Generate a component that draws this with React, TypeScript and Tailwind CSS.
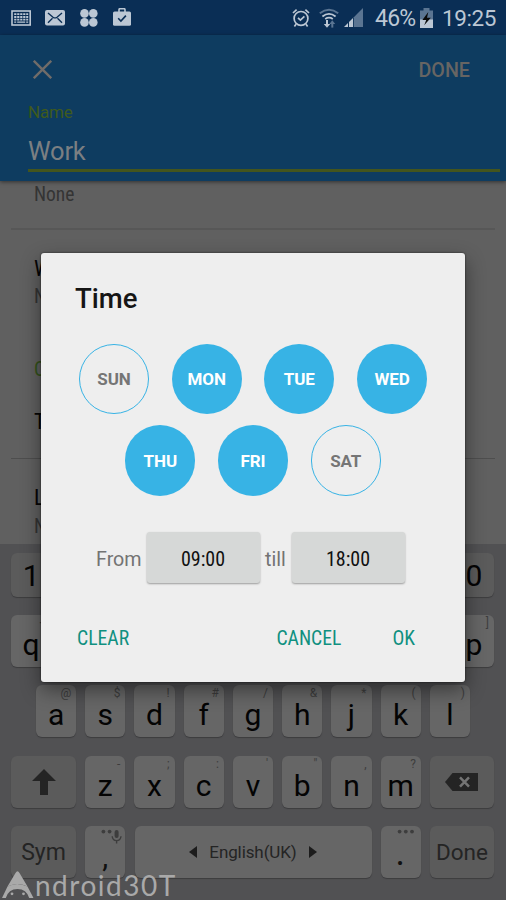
import { useState } from "react";

const ROW_HOME = [
  ["a", "@"], ["s", "$"], ["d", "!"], ["f", "#"], ["g", "/"],
  ["h", "&"], ["j", "*"], ["k", "("], ["l", ")"],
];
const ROW_BOTTOM = [
  ["z", "-"], ["x", ";"], ["c", ":"], ["v", "'"], ["b", '"'], ["n", ","], ["m", "?"],
];

const WEEK = [
  ["SUN", "MON", "TUE", "WED"],
  ["THU", "FRI", "SAT"],
];

const keyBase = "rounded-[6px] shadow-[0_1px_1px_#3c3c3e]";
const condensed = "font-['Roboto_Condensed','Roboto',sans-serif] [font-stretch:condensed]";

function StatusBar() {
  return (
    <div className="flex h-[35px] items-center bg-[#0a2e55] text-[#bcc7d4]">
      <svg className="ml-[11px]" width="21" height="16" viewBox="0 0 21 16">
        <rect x="1" y="1" width="18.2" height="14" fill="none" stroke="#bcc7d4" strokeWidth="1.6" />
        <path d="M3.2 4.2h14M3.2 7h14M3.2 9.6h14" stroke="#bcc7d4" strokeWidth="1.8" strokeDasharray="2.2 .8" />
        <path d="M3.2 12.2h2M6.2 12.2h8M15.2 12.2h2" stroke="#bcc7d4" strokeWidth="1.2" />
      </svg>
      <svg className="ml-[13px]" width="20" height="16" viewBox="0 0 20 16">
        <rect width="20" height="15.5" rx="2" fill="#bcc7d4" />
        <path d="M3 3l5 4.2q2 1.4 4 0L17 3M3 12.8l4.5-4.5M17 12.8l-4.5-4.5" fill="none" stroke="#0a2e55" strokeWidth="1.4" />
      </svg>
      <svg className="ml-[14.5px]" width="18" height="18" viewBox="0 0 18 18" fill="#bcc7d4">
        <circle cx="4.5" cy="4.4" r="4.3" />
        <circle cx="13.3" cy="4.4" r="4.3" />
        <circle cx="4.5" cy="13.4" r="4.3" />
        <circle cx="13.3" cy="13.4" r="4.3" />
      </svg>
      <svg className="ml-[15.5px] mb-px" width="18" height="18" viewBox="0 0 18 18">
        <path d="M6 4V1.8Q6 .7 7.1.7h3.8q1.1 0 1.1 1.1V4" fill="none" stroke="#bcc7d4" strokeWidth="1.6" />
        <rect y="3.4" width="18" height="14.4" rx="1.6" fill="#bcc7d4" />
        <path d="M5.2 10.3l2.7 2.7 5-5.4" fill="none" stroke="#0a2e55" strokeWidth="1.6" />
      </svg>
      <div className="grow" />
      <svg width="18" height="20" viewBox="0 0 18 20" fill="none" stroke="#bcc7d4" strokeWidth="1.7">
        <circle cx="9" cy="10.4" r="6.9" />
        <path d="M1 5l3.6-3.4M17 5l-3.6-3.4M4 16.2l-1.6 2.2M14 16.2l1.6 2.2M6 9.8l2.4 2.3 4-3.8" />
      </svg>
      <svg className="ml-[9px]" width="20" height="22" viewBox="0 0 20 22" fill="none">
        <path d="M.8 6.2q9.2-7 18.4 0" stroke="#5b7592" strokeWidth="2" />
        <path d="M3.4 9.4q6.6-5 13.2 0" stroke="#bcc7d4" strokeWidth="1.9" />
        <path d="M6.2 12q3.8-2.6 7.6 0" stroke="#bcc7d4" strokeWidth="1.8" />
        <path d="M8 13v5" stroke="#bcc7d4" strokeWidth="2" />
        <path d="M4.8 17h6.4L8 20.8z" fill="#bcc7d4" />
        <path d="M13.3 20.6v-4" stroke="#5b7592" strokeWidth="2" />
        <path d="M10.4 17h5.8l-2.9-3.8z" fill="#5b7592" />
      </svg>
      <svg className="ml-[5px]" width="19" height="19" viewBox="0 0 19 19">
        <path d="M9.8 9.2L19 0v19H9.8z" fill="#5b7592" />
        <path d="M0 19l4-4v4zM5 14l4-4v9H5z" fill="#bcc7d4" />
      </svg>
      <span className="ml-[12px] w-[42px] pt-[2px] text-[23px] leading-[33px] tracking-[-0.8px]">46%</span>
      <svg className="ml-[3px]" width="13" height="20" viewBox="0 0 13 20">
        <path d="M3.5 0h6v2.5H13V12H0V2.5h3.5z" fill="#5b7592" />
        <rect y="11.5" width="13" height="8.5" fill="#bcc7d4" />
        <path d="M8.3 4L2.4 12h3.8l-2 5.2 6.6-7.4H7z" fill="#0a0a0a" />
      </svg>
      <span className="ml-[9px] mr-[10px] w-[54px] pt-px text-[22.5px] leading-[34px] tracking-[-0.4px]">19:25</span>
    </div>
  );
}

function Header() {
  return (
    <header className="relative flex h-[146px] flex-col bg-[#0e3c60] shadow-[0_1px_4px_rgba(0,0,0,0.5)]">
      <div className="flex h-[68px] items-center justify-between pl-[33px] pr-[36px]">
        <svg width="19" height="19" viewBox="0 0 19 19" stroke="#706c69" strokeWidth="2.4">
          <path d="M.8.8l17.4 17.4M18.2.8L.8 18.2" />
        </svg>
        <span className="pt-[3px] text-[19.7px] font-medium text-[#676563]">DONE</span>
      </div>
      <label className="ml-7 mt-[-1px] text-[17px] leading-5 tracking-[-0.15px] text-[#3f5a1c]">Name</label>
      <div className="ml-7 mr-[6px] mt-[9px] h-[41px] border-b-[3px] border-[#43551d] pt-1 text-[25.5px] leading-[32px] tracking-[-0.2px] text-[#7b7f82]">
        Work
      </div>
    </header>
  );
}

function Settings() {
  return (
    <main className={`h-[363px] overflow-hidden bg-[#606060] px-[11px] text-[19.5px] leading-6 text-[#050505] ${condensed}`}>
      <div className="h-[49px] border-b-2 border-[#575757] pl-[23px] pt-[2px] text-[#343434]">None</div>
      <div className="h-[229px] border-b border-[#4e4e4e] pl-[23px] pt-[27px]">
        <p className="text-[22px]">W</p>
        <p className="pt-[4px] text-[#343434]">N</p>
        <p className="pt-[49px] text-[#33521a]">C</p>
        <p className="pt-[28px] text-[22px]">T</p>
      </div>
      <div className="pl-[23px] pt-[27px]">
        <p className="text-[22px]">L</p>
        <p className="pt-[5px] text-[#343434]">N</p>
      </div>
    </main>
  );
}

function NumberKey({ label }: { label: string }) {
  return (
    <div className={`h-[44px] w-[40.2px] bg-[#5b5b5b] text-center text-[30px] leading-[45px] text-[#040404] ${keyBase}`}>
      {label}
    </div>
  );
}

function Key({ label, hint }: { label: string; hint: string }) {
  return (
    <div className={`relative h-[52px] w-[40.2px] bg-[#666666] text-center text-[30px] leading-[60px] text-[#040404] ${keyBase}`}>
      {label}
      <span className="absolute right-[5px] top-0 text-[12px] leading-[16px] text-[#3d3d3d]">{hint}</span>
    </div>
  );
}

function Keyboard() {
  return (
    <section className="flex h-[356px] flex-col bg-[#515153] pl-[11px] pr-[12px] pt-[9px]">
      {/* the dialog covers the middle of the two upper rows */}
      <div className="flex justify-between">
        <NumberKey label="1" />
        <NumberKey label="0" />
      </div>
      <div className="mt-[18px] flex justify-between">
        <Key label="q" hint="+" />
        <Key label="p" hint="]" />
      </div>
      <div className="mt-[18.4px] flex justify-between pl-[25px] pr-[24px]">
        {ROW_HOME.map(([l, h]) => <Key key={l} label={l} hint={h} />)}
      </div>
      <div className="mt-[18.4px] flex justify-between">
        <div className={`flex h-[52px] w-[65px] items-center justify-center bg-[#5b5b5b] ${keyBase}`}>
          <svg width="24" height="26" viewBox="0 0 24 26" fill="#242424">
            <path d="M12 0l12 12h-8v14H8V12H0z" />
          </svg>
        </div>
        {ROW_BOTTOM.map(([l, h]) => <Key key={l} label={l} hint={h} />)}
        <div className={`flex h-[52px] w-[64px] items-center justify-center bg-[#5b5b5b] ${keyBase}`}>
          <svg width="33" height="18" viewBox="0 0 33 18">
            <path d="M0 9l7.5-9H33v18H7.5z" fill="#242424" />
            <path d="M15 4.3l9 9.4M24 4.3l-9 9.4" stroke="#747474" strokeWidth="2.5" />
          </svg>
        </div>
      </div>
      <div className="mt-[18.2px] flex justify-between">
        <div className={`h-[52px] w-[65px] bg-[#5b5b5b] text-center text-[23px] leading-[53px] text-[#242424] ${keyBase}`}>Sym</div>
        <div className={`relative h-[52px] w-[40.2px] bg-[#666666] text-center text-[30px] leading-[62px] text-[#101010] ${keyBase}`}>
          ,
          <svg className="absolute left-[16px] top-[3px]" width="22" height="16" viewBox="0 0 22 16" fill="#3d3d3d">
            <circle cx="2.4" cy="2.6" r="1.9" />
            <circle cx="8.6" cy="2.6" r="1.9" />
            <rect x="13.6" y="1" width="4" height="8" rx="2" />
            <path d="M11.2 7.2q.4 4.4 4.4 4.4t4.4-4.4M15.6 11.6v3" fill="none" stroke="#3d3d3d" strokeWidth="1.4" />
          </svg>
        </div>
        <div className={`flex h-[52px] w-[237px] items-center justify-center gap-[12px] bg-[#666666] text-[17px] text-[#242424] ${keyBase}`}>
          <svg width="8" height="12" viewBox="0 0 8 12" fill="#1c1c1c"><path d="M8 0v12L0 6z" /></svg>
          <span className="pt-px tracking-[-0.1px]">English(UK)</span>
          <svg width="8" height="12" viewBox="0 0 8 12" fill="#1c1c1c"><path d="M0 0v12l8-6z" /></svg>
        </div>
        <div className={`relative h-[52px] w-[40.2px] bg-[#666666] pr-px text-center text-[36px] leading-[54px] text-[#101010] ${keyBase}`}>
          .
          <svg className="absolute left-[16px] top-[3px]" width="18" height="5" viewBox="0 0 18 5" fill="#3d3d3d">
            <circle cx="2.6" cy="2.6" r="1.9" />
            <circle cx="8.8" cy="2.6" r="1.9" />
            <circle cx="15" cy="2.6" r="1.9" />
          </svg>
        </div>
        <div className={`h-[52px] w-[64px] bg-[#5b5b5b] text-center text-[22.5px] leading-[53px] text-[#242424] ${keyBase}`}>Done</div>
      </div>
    </section>
  );
}

function TimeDialog() {
  const [days, setDays] = useState<string[]>(["MON", "TUE", "WED", "THU", "FRI"]);

  function toggle(day: string) {
    setDays(days.includes(day) ? days.filter((d) => d !== day) : [...days, day]);
  }

  return (
    <div className="absolute left-[41px] top-[253px] flex h-[429px] w-[424px] flex-col rounded-[3px] bg-[#eeeeee] shadow-[0_0_2px_rgba(0,0,0,0.7),0_8px_20px_rgba(0,0,0,0.45)]">
      <h1 className="ml-[34px] mt-[28px] text-[27.5px] font-medium leading-[36px] text-[#151515]">Time</h1>
      <div className="mt-[27px] flex flex-col gap-[11.2px]">
        {WEEK.map((row) => (
          <div key={row[0]} className="flex justify-center gap-[22.4px]">
            {row.map((day) => (
              <button
                key={day}
                onClick={() => toggle(day)}
                className={`size-[70.3px] rounded-full pt-[2px] text-[17px] font-bold tracking-[-0.1px] ${
                  days.includes(day) ? "bg-[#37b3e5] text-white" : "border-[1.5px] border-[#37b3e5] text-[#757575]"
                }`}
              >
                {day}
              </button>
            ))}
          </div>
        ))}
      </div>
      <div className="ml-[55px] mt-[36.5px] flex items-center text-[19.7px] text-[#737373]">
        <span className="w-[50.5px] pt-[3px]">From</span>
        <button className={`h-[51px] w-[113px] rounded-[3px] bg-[#d6d8d7] pt-[2px] text-[20px] text-[#101010] shadow-[0_1px_2px_rgba(0,0,0,0.35)] ${condensed}`}>09:00</button>
        <span className="w-[32px] pt-[3px] text-center">till</span>
        <button className={`h-[51px] w-[113px] rounded-[3px] bg-[#d6d8d7] pt-[2px] text-[20px] text-[#101010] shadow-[0_1px_2px_rgba(0,0,0,0.35)] ${condensed}`}>18:00</button>
      </div>
      <div className={`ml-[36px] mr-[50px] mt-[41.5px] flex text-[19.7px] leading-[28px] text-[#109080] ${condensed}`}>
        <button>CLEAR</button>
        <button className="ml-auto">CANCEL</button>
        <button className="ml-[51px]">OK</button>
      </div>
    </div>
  );
}

function Watermark() {
  return (
    <div className="absolute bottom-0 left-[2px] flex h-[29px] items-start text-[#a9a9a9]">
      <svg width="32" height="28" viewBox="0 0 32 28" fill="#a9a9a9">
        <path d="M13.5 2q2-3.500 4 0L25.500 15.500q-9.500-5-20 0z" />
        <path d="M5.500 15.500q9.500-5 20 0L31.500 27h-4.300Q24.500 18 15.500 18T3.800 27H0z" />
        <circle cx="10" cy="22.8" r="1.4" />
        <circle cx="21.5" cy="22.8" r="1.4" />
      </svg>
      <span className="pl-px font-['Lato',sans-serif] text-[28px] leading-[29px] tracking-[1.5px]">ndroid30T</span>
    </div>
  );
}

export default function App() {
  return (
    <div className="relative h-[900px] w-[506px] overflow-hidden font-['Roboto',sans-serif]">
      <StatusBar />
      <Header />
      <Settings />
      <Keyboard />
      <TimeDialog />
      <Watermark />
    </div>
  );
}
